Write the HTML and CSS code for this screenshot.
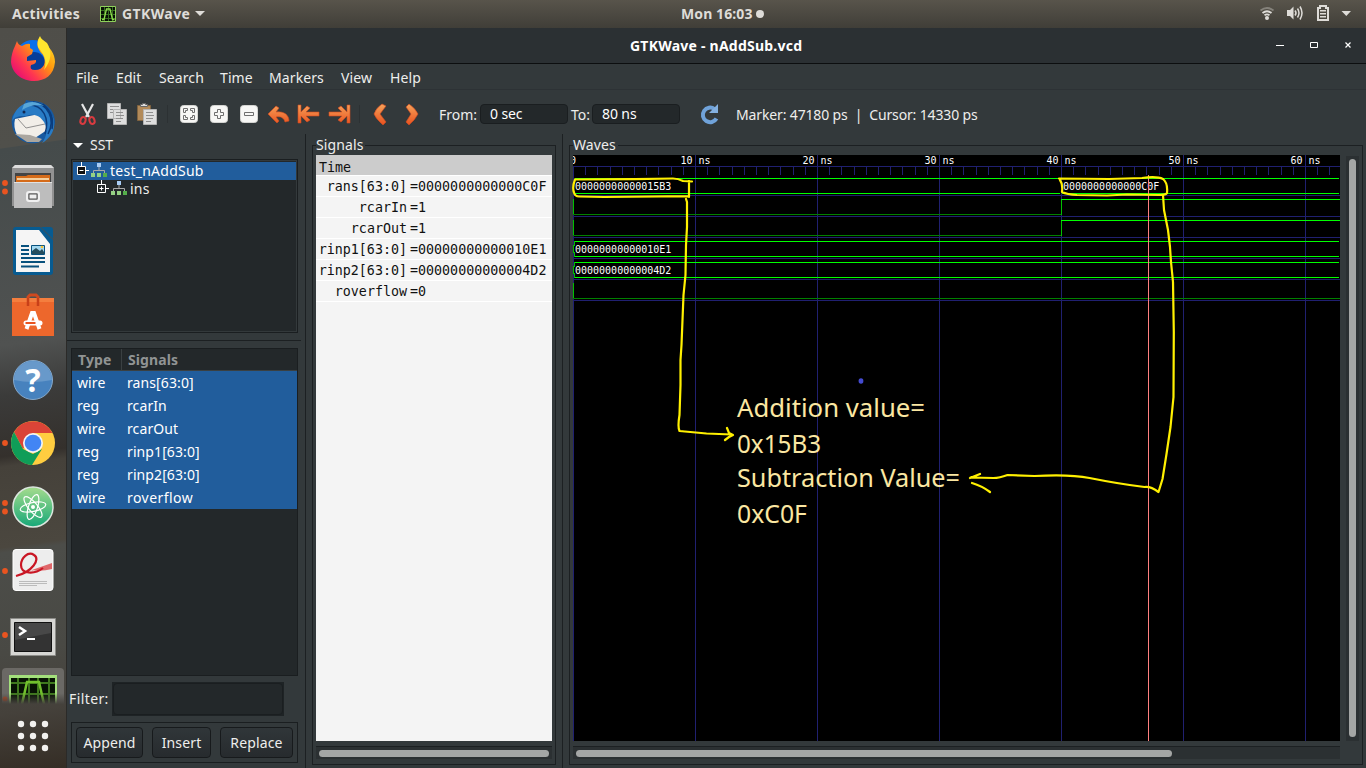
FILE: index.html
```html
<!DOCTYPE html>
<html lang="en">
<head>
<meta charset="utf-8">
<title>GTKWave - nAddSub.vcd</title>
<link rel="stylesheet" href="styles.css">
</head>
<body>
<header class="topbar">
  <span class="activities">Activities</span>
  <svg class="appicon" width="16" height="16" viewBox="0 0 16 16"><path fill="#071005" stroke="#8fd05c" d="M.5.5h15v15H.5z"/><path stroke="#386e20" d="M1 4.5h14M1 8.5h14M1 12.5h14M4.500 1v14M8.500 1v14M12.500 1v14"/><path fill="none" stroke="#8ddd4d" stroke-width="1.300" d="M2 13.500h2L6.500 3h3.500l2.500 10.500h2"/></svg>
  <span class="appname">GTKWave</span>
  <i class="caret"></i>
  <span class="clock">Mon 16:03</span><i class="clockdot"></i>
  <svg class="tray" width="110" height="28" viewBox="1256 0 110 28"><g fill="none" stroke="#dedcd8" stroke-width="1.800"><path stroke="#85827b" d="M1260.500 10.500q6.500-5 13 0"/><path d="M1262.500 13q4.500-3.500 9 0M1264.500 15.300q2.500-1.700 5 0"/><path stroke-width="1.500" d="M1295 10.500q2 2.500 0 5M1297.500 8.500q3 4.500 0 9M1300 6.500q4 6.500 0 13"/></g><g fill="#dedcd8"><circle cx="1267" cy="18" r="2"/><path d="M1287 10h3l3.500-3.500v13L1290 16h-3zM1341.500 11h9.500l-4.700 5z"/></g><path fill="none" stroke="#dedcd8" stroke-width="2" d="M1318 20V8h2V6h6v2h2v12z"/><path stroke="#dedcd8" stroke-width="1.500" d="M1320 10.800h6M1320 13.800h6M1320 16.800h6"/></svg>
</header>
<div class="desktop">
<nav class="dock">
  <svg viewBox="0 0 66 64"><defs><linearGradient id="fx" x1="1" x2="0" y2=".9"><stop offset="0" stop-color="#fff12b"/><stop offset=".4" stop-color="#ff980e"/><stop offset=".7" stop-color="#ff3750"/><stop offset="1" stop-color="#e00080"/></linearGradient></defs><circle cx="33" cy="30" r="18" fill="#0a70ea"/><circle cx="34" cy="35" r="11" fill="#063d99"/><path fill="url(#fx)" d="M17 13q1 4 5 5 5-3 8-2l0 4 3 2-1 4-5 3 0 4 9-1q1 4-5 5-2 5 4 5c9 0 12-8 8-15-7-7-7-14-3-18l1 5c9 4 14 12 14 20-1 13-10 19-21 19S12 46 11 34c0-6 2-12 4-16z"/><path fill="#ffe62e" d="M40 8q-3 5-2 11c5 7 10 12 6 23 8-10 8-19 3-27-4-3-6-4-7-7z"/></svg>
  <svg viewBox="0 0 66 64"><path fill="#1759a0" d="M12 25c-2 12 5 24 17 26 13 2 25-7 26-21 0-13-11-22-24-21l-5-1-1 3-5 5q-6 4-8 9z"/><path fill="#f1eee8" d="m15 27 29-6 3 17-15 10-15-5q-4-8-2-16z"/><path fill="#aaa69f" d="m15 42 15 1 12 4-3 3-12 0z"/><path fill="none" stroke="#777" stroke-width=".8" d="m18 27 8 9 19-4"/><path fill="#287bc5" d="M12 29c4-20 22-23 34-13 12 9 11 27-4 35 5-6 6-15 2-21-4-7-12-9-18-6-7 0-10 0-14 5z"/><path fill="none" stroke="#0a3c7d" stroke-width="1.500" d="M29 13c14 0 21 13 16 29M33 10c15 2 23 17 15 32M43 12c8 7 11 14 9 25"/><path fill="#58a6d8" d="M24 12q10-5 20 2-10-3-22 4z"/><circle cx="24" cy="20" r="1.500" fill="#102750"/></svg>
  <svg viewBox="0 0 66 64"><g fill="#e95420"><circle cx="5" cy="27" r="2.900"/><circle cx="5" cy="35.500" r="2.900"/></g><path fill="#929292" d="M12 12l3-3h36l3 3v38H12z"/><path fill="#ddd" d="M12 12l3-3h36l3 3z"/><path fill="#444" d="M15 17h36v10H15z"/><path fill="#d56b19" d="M16 20h10l2-1h22v8H16z"/><path stroke="#fff0c9" stroke-width="1.500" d="M17 23h32"/><path fill="#bdbdbd" d="M14 26h38v26H14z"/><path stroke="#e1e1e1" d="M14 26.500h38"/><rect x="27" y="36" width="12" height="9" rx="2" fill="#aaa" stroke="#f0f0f0" stroke-width="2"/><path fill="#eee" stroke="#555" d="M29 38h8v5h-8z"/></svg>
  <svg viewBox="0 0 66 64"><path fill="#075b91" d="M16 7h24l13 13v32q0 3-3 3H16q-3 0-3-3V10q0-3 3-3z"/><path fill="#f5f5f5" d="M16 10h23l11 14v28H16z"/><path fill="#075b91" d="M41 7h9q3 0 3 3v9z"/><path stroke="#08517d" stroke-width="2" d="M21 26h8M21 30h8M21 34h8M21 38h24M21 42h24M21 46.500h18"/><path fill="#a3d8f0" stroke="#08517d" d="M31.500 25.500h13v9h-13z"/><path fill="#254d5d" d="m32 34 0-3 4-3 4 3 2-2 2 3v2z"/><circle cx="42" cy="27" r="1.300" fill="#fac335"/></svg>
  <svg viewBox="0 0 66 64"><path fill="none" stroke="#cf491f" stroke-width="3" d="M28 22v-9l2-2h6l2 2v9"/><path fill="#ed672c" d="M12 14h42v38H12z"/><path fill="#f47e3e" d="M12 14h42v4H12z"/><path fill="none" stroke="#c84019" stroke-width="2.500" d="M28 22v-8M38 22v-8"/><path fill="none" stroke="#fff" stroke-width="4" d="m26.500 45 5.500-16h2l5.500 16"/><rect x="23.500" y="36.500" width="19" height="5" rx="2.500" fill="#fff"/><path stroke="#e95420" stroke-width="2" d="M25.500 39h10"/></svg>
  <svg viewBox="0 0 66 64"><circle cx="33" cy="32" r="19.500" fill="#4782be" stroke="#86a9cb"/><path fill="#6899ca" d="M14 32a19 19 0 0 1 38 0q-20 4-38 0z"/><text x="33" y="43.500" class="helpmark">?</text></svg>
  <svg viewBox="0 0 66 64"><circle cx="5" cy="31" r="2.900" fill="#e95420"/><circle cx="33" cy="31" r="22" fill="#ffcd40"/><path fill="#db4437" d="M14 20a22 22 0 0 1 38.500 1H33L23 37z"/><path fill="#0f9d58" d="M14 20a22 22 0 0 0 18 33l10-16-9 5-10-5z"/><circle cx="33" cy="31" r="10" fill="#f4f4f4"/><circle cx="33" cy="31" r="8.300" fill="#4285f4"/></svg>
  <svg viewBox="0 0 66 64"><defs><linearGradient id="at" y2="1" x2="0"><stop stop-color="#a5dc8d"/><stop offset="1" stop-color="#16a878"/></linearGradient></defs><g fill="#e95420"><circle cx="5" cy="27" r="2.900"/><circle cx="5" cy="35.500" r="2.900"/></g><circle cx="33" cy="31" r="20" fill="url(#at)" stroke="#dce6df" stroke-width="1.500"/><g fill="none" stroke="#fff" stroke-width="1.200"><ellipse cx="33" cy="31" rx="13" ry="4.500" transform="rotate(-12 33 31)"/><ellipse cx="33" cy="31" rx="13" ry="4.500" transform="rotate(50 33 31)"/><ellipse cx="33" cy="31" rx="13" ry="4.500" transform="rotate(108 33 31)"/></g><circle cx="33" cy="31" r="2" fill="#fff"/></svg>
  <svg viewBox="0 0 66 64"><circle cx="5" cy="31" r="2.900" fill="#e95420"/><rect x="13" y="9.500" width="40" height="41" rx="3" fill="#ededed" stroke="#fff"/><path fill="#df676a" d="M16 36q18-7 36-13v6q-11 3-20 1-6 3-16 6z"/><path fill="none" stroke="#c91624" stroke-width="2.200" d="M16 36c16-4 25-17 18-21-6-4-13 3-13 10 0 9 13 10 22 3"/><path stroke="#bbb" d="M19 41.500h28M19 43.500h28M19 45.500h18"/></svg>
  <svg viewBox="0 0 66 64"><circle cx="5" cy="31" r="2.900" fill="#e95420"/><path fill="#d6d6d3" stroke="#8c8c88" d="M10.500 14.500h45v37h-45z"/><path fill="#333" stroke="#111" d="M14.500 18.500h37v29h-37z"/><path fill="#484848" d="M15 19h36v10L15 36z"/><path fill="none" stroke="#fff" stroke-width="2.500" d="m19 23 6 4-6 4"/><path stroke="#fff" stroke-width="2" d="M27 35h8"/></svg>
  <svg class="running" viewBox="0 0 66 36"><defs><linearGradient id="fade" x2="0" y2="1"><stop offset=".7" stop-color="#45423d" stop-opacity="0"/><stop offset="1" stop-color="#45423d"/></linearGradient></defs><path fill="#6b6965" d="M2 36V4q0-4 4-4h54q4 0 4 4v32z"/><circle cx="5" cy="31" r="2.500" fill="#b94b28"/><path fill="#a3df7c" d="M9 7h48v29H9z"/><path fill="#071304" d="M11 10h44v26H11z"/><path fill="none" stroke="#3f791e" stroke-width="2" d="M11 15h44M11 26h44M18 10v26M29 10v26M38 10v26M49 10v26"/><path fill="none" stroke="#72c02d" stroke-width="2.500" d="m22 36 5-22h12l5 22"/><path fill="url(#fade)" d="M0 0h66v36H0z"/></svg>
  <svg viewBox="0 0 66 64"><g fill="#f2f1ef"><circle cx="21" cy="20" r="3.200"/><circle cx="33" cy="20" r="3.200"/><circle cx="45" cy="20" r="3.200"/><circle cx="21" cy="32" r="3.200"/><circle cx="33" cy="32" r="3.200"/><circle cx="45" cy="32" r="3.200"/><circle cx="21" cy="44" r="3.200"/><circle cx="33" cy="44" r="3.200"/><circle cx="45" cy="44" r="3.200"/></g></svg>
</nav>
<main class="window">
  <div class="titlebar"><span>GTKWave - nAddSub.vcd</span>
    <svg class="controls" width="84" height="35" viewBox="1272 28 84 35"><path stroke="#fff" d="M1276 45.500h8"/><path fill="none" stroke="#fff" d="M1310.500 42.500h7v5h-7z"/><path stroke="#fff" stroke-width="1.200" d="m1345.500 42.500 5 5m0-5-5 5"/></svg>
  </div>
  <div class="menubar"><span class="w-file">File</span><span class="w-edit">Edit</span><span class="w-search">Search</span><span class="w-time">Time</span><span class="w-markers">Markers</span><span class="w-view">View</span><span>Help</span></div>
  <div class="toolbar">
    <svg width="364" height="44" viewBox="67 90 364 44"><defs><linearGradient id="or" x2="0" y2="1"><stop stop-color="#f6a35a"/><stop offset="1" stop-color="#e9511e"/></linearGradient></defs>
      <g fill="none"><path stroke="#e6e6e6" stroke-width="2.200" d="m82 104 7 13m4-13-7 13"/><g stroke="#d83b40" stroke-width="2"><ellipse cx="83" cy="120.500" rx="2.500" ry="3.500" transform="rotate(20 83 120.500)"/><ellipse cx="92" cy="120.500" rx="2.500" ry="3.500" transform="rotate(-20 92 120.500)"/></g></g>
      <g fill="#dedede" stroke="#b4b4b4"><path d="M107.500 103.500h13v15h-13zM113.500 109.500h13v15h-13z"/></g><path stroke="#8e8e8e" fill="none" d="M110 106.500h9M110 109.500h3M110 112.500h3M116 112.500h7M116 115.500h8M116 118.500h7M116 121.500h5"/>
      <path fill="#b28a59" stroke="#80633f" d="M137.500 105.500h13v15h-13z"/><path fill="#ddd" stroke="#666" d="M140.500 106.500v-2h2v-1h3v1h2v2z"/><path fill="#dedede" stroke="#b4b4b4" d="M143.500 109.500h13v15h-13z"/><path stroke="#8e8e8e" d="M146 112.500h7M146 115.500h8M146 118.500h7M146 121.500h5"/>
      <path stroke="#2c3133" d="M167.500 105v18M359.500 105v18M431.500 105v18"/>
      <g fill="#f7f7f5" stroke="#d5d5d2"><rect x="180.500" y="105.500" width="17" height="17" rx="3"/><rect x="210.500" y="105.500" width="17" height="17" rx="3"/><rect x="240.500" y="105.500" width="17" height="17" rx="3"/></g>
      <g fill="none" stroke="#6f6f6f"><path d="M183.500 112.500v-4h4v2h-2v2zM194.500 112.500v-4h-4v2h2v2zM183.500 115.500v4h4v-2h-2v-2zM194.500 115.500v4h-4v-2h2v-2z"/><path d="M217.500 109.500h3v3h3v3h-3v3h-3v-3h-3v-3h3zM244.500 112.500h9v3h-9z"/></g>
      <g fill="url(#or)" stroke="#d5491e" stroke-width=".6"><path d="m268 114 8-8 3 2-3 4c8-1 13 3 13 9l-4 1c-1-4-4-6-9-5l3 4-2 2zM298 105h3v7l6-6 3 2-4 4h13v4h-13l4 4-3 2-6-6v7h-3zM350 105h-3v7l-6-6-3 2 4 4h-13v4h13l-4 4 3 2 6-6v7h3zM382 104l4 2-6 8 6 8-3 3q-7-6-9-11 2-6 8-10zM409 104l-3 3 5 7-5 8 3 3q6-5 9-11-3-6-9-10z"/></g></svg>
    <span class="t-from">From:</span><div class="entry e-from">0 sec</div><span class="t-to">To:</span><div class="entry e-to">80 ns</div>
    <svg class="reload" width="20" height="22" viewBox="0 0 20 22"><path fill="none" stroke="#70a3da" stroke-width="4" d="M15.500 6A7.300 7.300 0 1 0 17.500 15.500"/><path fill="#83b0e0" d="M10 10h9V1z"/></svg>
    <span class="status">Marker: 47180 ps&nbsp; |&nbsp; Cursor: 14330 ps</span>
  </div>
  <div class="panes">
    <section class="sidebar">
      <div class="sst-title"><i class="expander"></i><span>SST</span></div>
      <div class="tree">
        <div class="node root"><svg width="35" height="18" viewBox="75 162 35 18"><path fill="#111" d="M77 166h9v9h-9z"/><path fill="none" stroke="#fff" d="M81.500 162v4M86 170.500h3M77.500 166.500h8v8h-8zM79.500 170.500h4"/><use href="#hier" x="91" y="163"/></svg><span>test_nAddSub</span></div>
        <div class="node child"><svg width="35" height="18" viewBox="95 180 35 18"><path fill="none" stroke="#fff" d="M101.500 180v4M106 188.500h3M97.500 184.500h8v8h-8zM99.500 188.500h4M101.500 186.500v4"/><use href="#hier" x="111" y="181"/></svg><span>ins</span></div>
      </div>
      <div class="divider"></div>
      <div class="table">
        <div class="tr th"><span>Type</span><span>Signals</span></div>
        <div class="tr"><span>wire</span><span>rans[63:0]</span></div>
        <div class="tr"><span>reg</span><span>rcarIn</span></div>
        <div class="tr"><span>wire</span><span>rcarOut</span></div>
        <div class="tr"><span>reg</span><span>rinp1[63:0]</span></div>
        <div class="tr"><span>reg</span><span>rinp2[63:0]</span></div>
        <div class="tr"><span>wire</span><span class="loose">roverflow</span></div>
      </div>
      <div class="filter"><span>Filter:</span><div class="filterbox"><div></div></div></div>
      <div class="buttons"><div class="btn b1">Append</div><div class="btn b2">Insert</div><div class="btn b3">Replace</div></div>
    </section>
    <section class="frame signals"><h2>Signals</h2>
      <div class="siglist">
        <div class="time">Time</div>
        <div class="sig"><span>rans[63:0]</span><span>=0000000000000C0F</span></div>
        <div class="sig"><span>rcarIn</span><span>=1</span></div>
        <div class="sig"><span>rcarOut</span><span>=1</span></div>
        <div class="sig"><span>rinp1[63:0]</span><span>=00000000000010E1</span></div>
        <div class="sig"><span>rinp2[63:0]</span><span>=00000000000004D2</span></div>
        <div class="sig"><span>roverflow</span><span>=0</span></div>
      </div>
      <div class="hscroll"><i></i></div>
    </section>
    <section class="frame waves"><h2>Waves</h2>
      <div class="wavearea">
        <svg class="canvas" width="767" height="586" viewBox="573 155 767 586">
          <defs><path id="ticks" d="M585.500 167v8M597.500 167v8M610.500 167v8M622.500 167v8M634.500 167v8M646.500 167v8M658.500 167v8M671.500 167v8M683.500 167v8"/></defs>
          <g fill="none" stroke="#202070"><path d="M573 166.500h767M573.500 166v575M695.500 155v586M817.500 155v586M939.500 155v586M1061.500 155v586M1183.500 155v586M1305.500 155v586M573 195.500h767M573 216.500h767M573 237.500h767M573 258.500h767M573 279.500h767M573 300.500h767"/><use href="#ticks"/><use href="#ticks" x="122"/><use href="#ticks" x="244"/><use href="#ticks" x="366"/><use href="#ticks" x="488"/><use href="#ticks" x="610"/><use href="#ticks" x="732"/></g>
          <g fill="none" stroke="#008000"><path d="M573 214.500h488M573 235.500h488M573 298.500h767"/></g>
          <g fill="none" stroke="#00c000"><path d="M573.500 199v15M573.500 220v15M573.500 283v15M1061.500 199v16M1061.500 220v16M573.500 182v8M573.500 245v8M573.500 266v8M574.500 241v5M574.500 252v5M574.500 262v5M574.500 273v5"/></g>
          <g fill="none" stroke="#0f0"><path d="M575 178.500h485M575 193.500h485M1062 178.500h277M1062 193.500h277M1061 199.500h279M1061 220.500h279M575 241.500h764M575 256.500h764M575 262.500h764M575 277.500h764"/></g>
          <g class="wavetext"><text x="570" y="164">0</text><text x="680.500" y="164">10 ns</text><text x="802.500" y="164">20 ns</text><text x="924.500" y="164">30 ns</text><text x="1046.500" y="164">40 ns</text><text x="1168.500" y="164">50 ns</text><text x="1290.500" y="164">60 ns</text><text x="575" y="190">00000000000015B3</text><text x="1063" y="190">0000000000000C0F</text><text x="575" y="253">00000000000010E1</text><text x="575" y="274">00000000000004D2</text></g>
          <path stroke="#ff8080" d="M1148.500 175v566"/>
        </svg>
        <svg class="notes" width="767" height="586" viewBox="573 155 767 586">
          <g fill="none" stroke="#fff000" stroke-width="2.200" stroke-linecap="round" stroke-linejoin="round">
            <path d="M575 179.500l60-.3 38-.7q5 0 10 2.500l9 .5M575 179.500q-3 8-1 13 1 4 5 4l25 .5 85-.8M689 181v16M686 199l1 3v25l-1 18-.5 30-2 20-1 25-1 25-1 15v25l-1 30q-2 12 0 16l27 2.500 25 1M727 428l2 5 4 2-4 2-4 3"/>
            <path d="M1059 178.500l50 .5 33-1q15-2 21 1 5 4 4 14-1 2-8 2l-32-.5-20 1-30-.5q-10-.5-15-3 1-8-2-12M1163 195l1 15 4 20 2 17 1 15 2 20 .8 50-.3 65-3 30-4 27-4 25-4 13q-8-6-14-5-25-3-55-9-20-4-55-2l-27-1q-8 3-14 3l-23-.5M970 478l10-4M972 483q10 3 18 9"/>
          </g>
          <ellipse cx="861" cy="381" rx="2.400" ry="2.700" fill="#444bd0"/>
          <g class="notetext"><text x="737" y="417" textLength="188" lengthAdjust="spacingAndGlyphs">Addition value=</text><text x="737" y="452.500" textLength="84" lengthAdjust="spacingAndGlyphs">0x15B3</text><text x="737" y="487" textLength="223" lengthAdjust="spacingAndGlyphs">Subtraction Value=</text><text x="737" y="523" textLength="70" lengthAdjust="spacingAndGlyphs">0xC0F</text></g>
        </svg>
        <div class="vscroll"><i></i></div>
      </div>
      <div class="hscroll wide"><i></i></div>
    </section>
  </div>
</main>
</div>
<svg width="0" height="0" class="defs"><defs><g id="hier"><path fill="none" stroke="#aaa" d="M8 4v4M2.500 10V7.500h11V10"/><path fill="#a9cdf5" d="M6 0h4v4H6z"/><path fill="#95d184" d="M0 10h4v4H0zM6 10h4v4H6z"/><path fill="#55ae4b" d="M12 10h4v4h-4z"/></g></defs></svg>
</body>
</html>
```
FILE: styles.css
```css
* { box-sizing: border-box; }
body { margin: 0; width: 1366px; height: 768px; overflow: hidden; background: #33393b; color: #eeeeec; font: 14px/20px "Noto Sans", sans-serif; white-space: nowrap; }
svg { display: block; flex: none; }
i { display: block; flex: none; }
.defs { position: absolute; }
.topbar { height: 28px; display: flex; align-items: center; background: linear-gradient(#58544b, #403e38); color: #dedcd8; font-weight: bold; padding: 0 0 1px 12px; }
.activities { width: 88px; letter-spacing: .3px; }
.appname { margin-left: 6px; width: 69px; letter-spacing: .4px; }
.caret { margin-left: 4px; border: 5px solid transparent; border-top-color: #dedcd8; border-bottom: 0; }
.clock { margin-left: 476px; width: 73px; letter-spacing: .1px; }
.clockdot { width: 8px; height: 8px; border-radius: 50%; background: #dedcd8; margin-left: 2px; }
.tray { margin-left: auto; }
.desktop { display: flex; height: 740px; }
.dock { width: 67px; border-right: 1px solid #2b2a28; background: linear-gradient(172deg, #4f4e49 0, #50504b 119px, #454b4b 120px, #505251 315px, #3b3b3a 365px, #34302c 425px, #45413a 435px, #4b473f 515px, #4c4d49 520px, #494944 620px, #45413b 680px, #352e26 740px); }
.dock svg { width: 66px; height: 64px; }
.dock .running { height: 36px; }
.helpmark { font: bold 32px "Noto Sans", sans-serif; fill: #fff; text-anchor: middle; }
.window { width: 1299px; display: flex; flex-direction: column; }
.titlebar { height: 36px; border-bottom: 1px solid #0c0e0f; background: #2b3033; display: flex; align-items: center; justify-content: flex-end; padding-right: 10px; font-weight: bold; color: #fff; }
.titlebar span { width: 174px; margin-right: 468px; letter-spacing: .23px; }
.menubar { height: 26px; border-bottom: 1px solid #2d3235; display: flex; align-items: center; padding: 2px 0 0 9px; letter-spacing: .1px; }
.w-file { width: 40px; } .w-edit { width: 43px; } .w-search { width: 61px; } .w-time { width: 49px; } .w-markers { width: 72px; } .w-view { width: 49px; }
.toolbar { height: 44px; display: flex; align-items: center; }
.t-from { margin-left: 8px; width: 41px; padding-top: 5px; }
.t-to { margin-left: 3px; width: 21px; padding-top: 5px; }
.entry { height: 20px; margin-top: 4px; border: 1px solid #1a1e20; border-radius: 4px; background: #23282a; color: #fff; line-height: 18px; padding-left: 9px; width: 88px; letter-spacing: -.1px; }
.reload { margin: 4px 0 0 19px; }
.status { margin: 5px 0 0 17px; letter-spacing: -.14px; }
.panes { display: flex; height: 634px; }
.sidebar { width: 239px; border-right: 1px solid #1c2022; display: flex; flex-direction: column; }
.sst-title { height: 25px; display: flex; align-items: center; padding: 0 0 3px 6px; }
.expander { border: 5px solid transparent; border-top-color: #fff; border-bottom: 0; margin-right: 7px; }
.tree { height: 174px; width: 227px; margin-left: 4px; border: 1px solid #1a1e20; background: #23282a; box-shadow: inset 0 0 0 1px #33393b; padding: 2px 1px; }
.node { display: flex; height: 18px; line-height: 18px; letter-spacing: .25px; }
.root { background: #215d9c; color: #fff; padding-left: 2px; }
.child { padding-left: 22px; }
.divider { height: 1px; width: 234px; background: #1c2022; margin: 7px 0; }
.table { height: 328px; width: 227px; margin-left: 4px; border: 1px solid #1a1e20; background: #23282a; }
.tr { height: 23px; display: flex; background: #215d9c; color: #fff; line-height: 23px; letter-spacing: .1px; }
.tr span { padding-left: 5px; }
.tr span:first-child { width: 50px; }
.tr .loose { letter-spacing: .45px; }
.th { height: 22px; background: #23282a; color: #919494; font-weight: bold; border-bottom: 1px solid #3a4042; line-height: 21px; }
.th span:first-child { border-right: 1px solid #3a4042; padding-left: 6px; }
.th span + span { padding-left: 6px; }
.filter { height: 34px; margin: 6px 0; display: flex; align-items: center; padding-left: 2px; letter-spacing: .4px; }
.filter span { width: 43px; }
.filterbox { width: 172px; height: 34px; background: #1e2325; padding: 1px; }
.filterbox div { height: 32px; border: 1px solid #1a1e20; border-radius: 4px; background: #23282a; }
.buttons { width: 227px; height: 41px; margin-left: 4px; border: 1px solid #1a1e20; display: flex; gap: 9px; padding: 4px; }
.btn { height: 31px; border: 1px solid #171a1c; border-radius: 4px; background: linear-gradient(#303639, #272b2e); text-align: center; line-height: 29px; letter-spacing: .15px; }
.b1 { width: 67px; } .b2 { width: 59px; } .b3 { width: 73px; }
.frame { border: 1px solid #1c2022; margin-top: 11px; height: 620px; }
.frame h2 { font: 14px/20px "Noto Sans", sans-serif; margin: -11px 0 0; padding: 0 2px 0 0; width: max-content; background: #33393b; letter-spacing: .1px; }
.signals { width: 244px; margin-left: 6px; padding: 0 3px; }
.siglist { width: 236px; height: 586px; background: #f4f4f4; color: #111; font: 13.330px/20px "DejaVu Sans Mono", monospace; }
.time { height: 21px; background: #ccc; border-bottom: 1px solid #fff; line-height: 25px; padding-left: 3px; }
.sig { height: 21px; border-bottom: 1px solid #fff; display: flex; line-height: 21px; }
.sig span:first-child { width: 91px; text-align: right; }
.sig span + span { margin-left: 3px; }
.hscroll { width: 236px; height: 13px; margin-top: 5px; border-top: 1px solid #1c2022; background: #2b3032; padding: 3px; }
.hscroll i { height: 7px; border-radius: 4px; background: #a4a6a5; }
.waves { width: 794px; margin-left: 13px; padding-left: 3px; }
.waves::before { content: ""; position: absolute; left: 562px; top: 134px; width: 1px; height: 634px; background: #1c2022; }
.wavearea { position: relative; display: flex; height: 586px; }
.canvas { background: #000; }
.notes { position: absolute; left: 0; top: 0; overflow: visible; }
.wavetext { font: 10px "DejaVu Sans Mono", monospace; fill: #fff; }
.notetext { font: 26px "Noto Sans", sans-serif; fill: #fbe7a2; }
.vscroll { width: 13px; height: 585px; margin: 1px 0 0 6px; background: #2b3032; padding: 3px; }
.vscroll i { width: 7px; height: 578px; border-radius: 4px; background: #a4a6a5; }
.wide { width: 767px; }
.wide i { width: 596px; }
```
